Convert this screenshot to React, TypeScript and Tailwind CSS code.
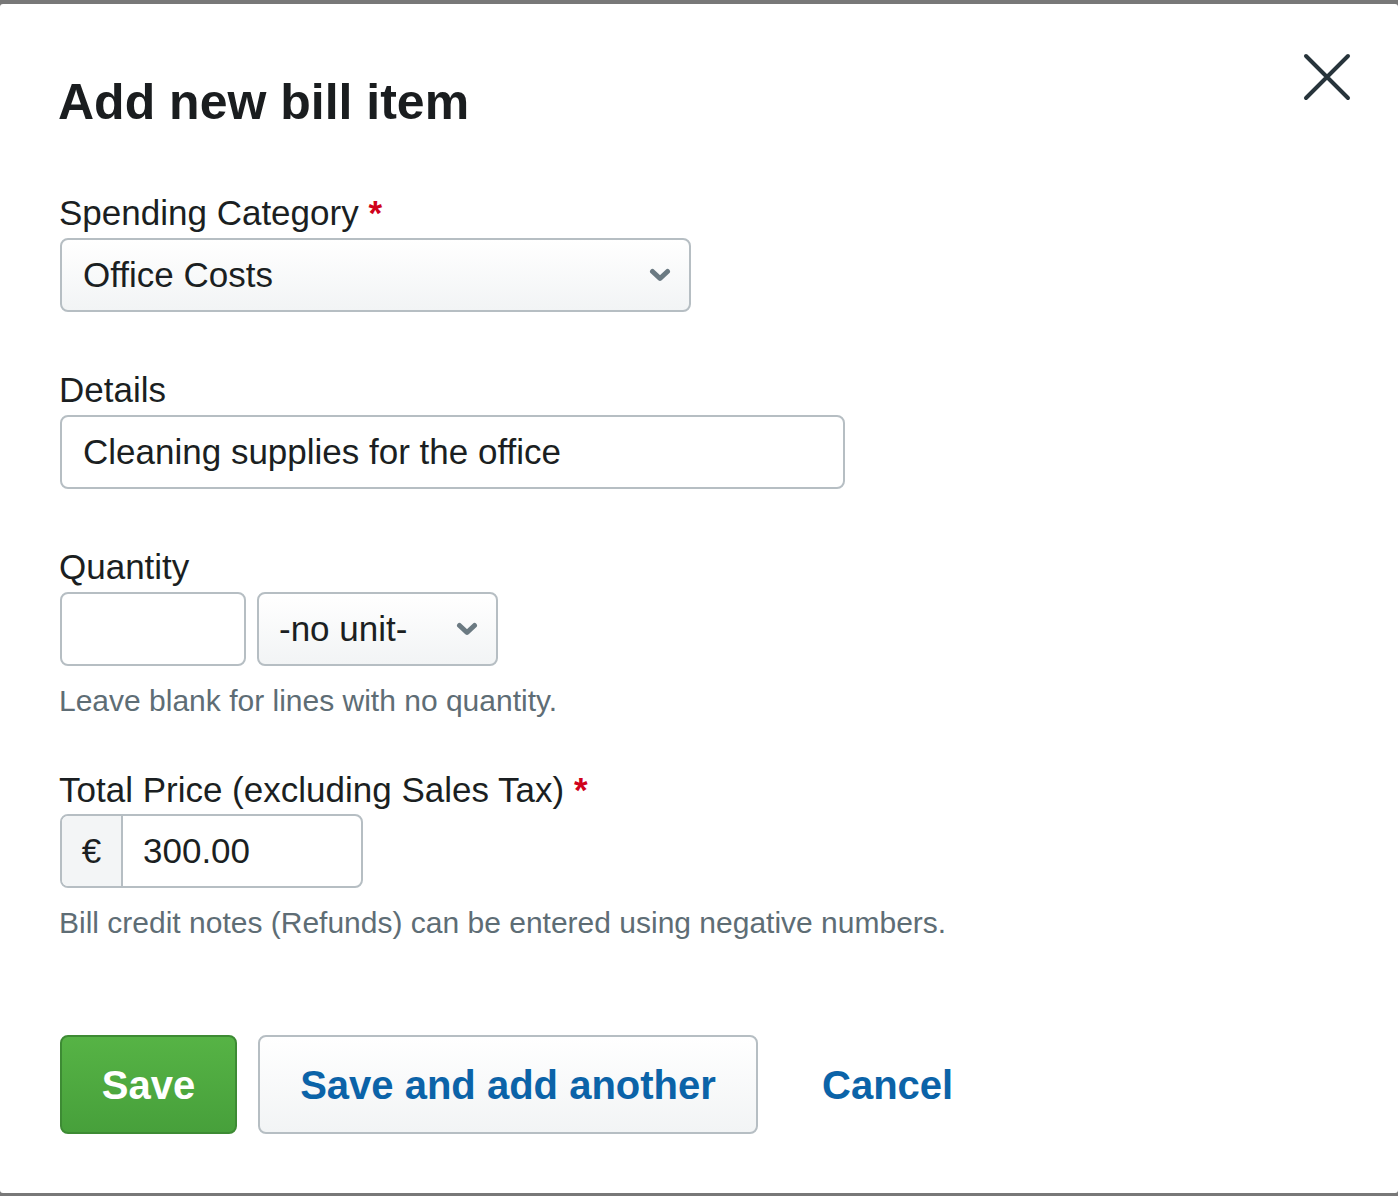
import React from "react";

function Chevron() {
  return (
    <svg width="22" height="16" viewBox="0 0 22 16" className="shrink-0">
      <path d="M3.5 4.5 L11 11.5 L18.5 4.5" fill="none" stroke="#6b7a82" strokeWidth="5" strokeLinecap="round" strokeLinejoin="round" />
    </svg>
  );
}

export default function App() {
  return (
    <div className="w-[1398px] h-[1196px] bg-[#787878] pt-[4px] pb-[3px] flex flex-col" style={{ fontFamily: '"Liberation Sans", Arial, sans-serif' }}>
      <div className="flex-1 bg-white rounded-[3px] relative pl-[60px] text-[#1b1f22]">
        <button className="absolute left-[1300px] top-[46px] w-[54px] h-[54px] flex items-center justify-center">
          <svg width="54" height="54" viewBox="0 0 54 54">
            <path d="M6 6 L48 48 M48 6 L6 48" stroke="#27343b" strokeWidth="4" strokeLinecap="round" />
          </svg>
        </button>

        <h1 className="mt-[70px] -ml-[2px] text-[50px] leading-[56px] font-bold text-[#1a1d1f]">Add new bill item</h1>

        <div className="mt-[63px] -ml-[1px] text-[35px] leading-[40px]">
          Spending Category <span className="text-[#d0021b] font-bold">*</span>
        </div>
        <div className="mt-[5px] w-[631px] h-[74px] border-2 border-[#b6bec3] rounded-[8px] bg-gradient-to-b from-white to-[#f2f4f5] flex items-center justify-between pl-[21px] pr-[18px] text-[35px]">
          <span>Office Costs</span>
          <Chevron />
        </div>

        <div className="mt-[58px] -ml-[1px] text-[35px] leading-[40px]">Details</div>
        <div className="mt-[5px] w-[785px] h-[74px] border-2 border-[#b6bec3] rounded-[8px] bg-white flex items-center pl-[21px] text-[35px]">
          Cleaning supplies for the office
        </div>

        <div className="mt-[58px] -ml-[1px] text-[35px] leading-[40px]">Quantity</div>
        <div className="mt-[5px] flex gap-[11px]">
          <div className="w-[186px] h-[74px] border-2 border-[#b6bec3] rounded-[8px] bg-white" />
          <div className="w-[241px] h-[74px] border-2 border-[#b6bec3] rounded-[8px] bg-gradient-to-b from-white to-[#f2f4f5] flex items-center justify-between pl-[20px] pr-[18px] text-[35px]">
            <span>-no unit-</span>
            <Chevron />
          </div>
        </div>
        <div className="mt-[17px] -ml-[1px] text-[30px] leading-[36px] text-[#5e6d75]">Leave blank for lines with no quantity.</div>

        <div className="mt-[51px] -ml-[1px] text-[35px] leading-[40px]">
          Total Price (excluding Sales Tax) <span className="text-[#d0021b] font-bold">*</span>
        </div>
        <div className="mt-[4px] w-[303px] h-[74px] border-2 border-[#b6bec3] rounded-[8px] bg-white flex overflow-hidden text-[35px]">
          <div className="w-[61px] h-full bg-[#f3f5f6] border-r-2 border-[#b6bec3] flex items-center justify-center">€</div>
          <div className="flex items-center pl-[20px]">300.00</div>
        </div>
        <div className="mt-[17px] -ml-[1px] text-[30px] leading-[36px] text-[#5e6d75]">Bill credit notes (Refunds) can be entered using negative numbers.</div>

        <div className="mt-[94px] flex items-center">
          <button className="w-[177px] h-[99px] rounded-[8px] border-2 border-[#3d8b34] bg-gradient-to-b from-[#56b345] to-[#47a03b] text-white font-bold text-[40px]">
            Save
          </button>
          <button className="ml-[21px] w-[500px] h-[99px] rounded-[8px] border-2 border-[#b6bec3] bg-gradient-to-b from-white to-[#f2f4f5] text-[#0b63a8] font-bold text-[40px]">
            Save and add another
          </button>
          <a className="ml-[64px] text-[#0b63a8] font-bold text-[40px]">Cancel</a>
        </div>
      </div>
    </div>
  );
}
